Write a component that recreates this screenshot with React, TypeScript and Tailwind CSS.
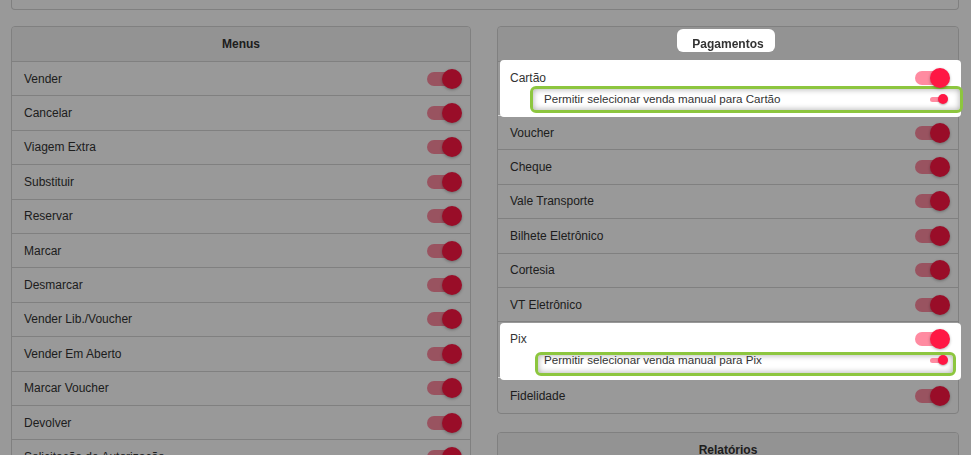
import React from 'react'

const menus = [
  'Vender',
  'Cancelar',
  'Viagem Extra',
  'Substituir',
  'Reservar',
  'Marcar',
  'Desmarcar',
  'Vender Lib./Voucher',
  'Vender Em Aberto',
  'Marcar Voucher',
  'Devolver',
  'Solicitação de Autorização',
]

const relatorios = ['Vendas', 'Caixa', 'Bilhetes']

function Switch({ small }: { small?: boolean }) {
  if (small) {
    return (
      <span className="relative block h-[10px] w-[18px] shrink-0">
        <span className="absolute left-0 top-[2.5px] h-[5px] w-[16px] rounded-full bg-[#ff1744]/50" />
        <span className="absolute right-0 top-0 h-[10px] w-[10px] rounded-full bg-[#ff1744] shadow-[0_1px_2px_rgba(0,0,0,0.3)]" />
      </span>
    )
  }
  return (
    <span className="relative block h-[20px] w-[35px] shrink-0">
      <span className="absolute left-0 top-[3px] h-[14px] w-[32px] rounded-full bg-[#ff1744]/50" />
      <span className="absolute right-0 top-0 h-[20px] w-[20px] rounded-full bg-[#ff1744] shadow-[0_1px_3px_rgba(0,0,0,0.3)]" />
    </span>
  )
}

function Row({ label }: { label: string }) {
  return (
    <div className="flex h-[34.4px] items-center justify-between border-b border-[#d5d5d5] pl-[12px] pr-[8px] last:border-b-0">
      <span>{label}</span>
      <Switch />
    </div>
  )
}

// linha destacada pelo tour, com a opção de venda manual
function RowDestaque({
  label,
  highlight,
  frame,
  pad,
}: {
  label: string
  highlight: string
  frame: string
  pad: string
}) {
  return (
    <div className={`relative z-20 border-b border-[#d5d5d5] pl-[12px] pr-[8px] ${pad}`}>
      <span className={`absolute -z-10 rounded-[4px] bg-white ${highlight}`} />
      <div className="flex h-[16px] items-center justify-between">
        <span>{label}</span>
        <Switch />
      </div>
      <div className="relative ml-[34px] mr-[2px] mt-[5px] flex h-[16px] items-center justify-between text-[11.6px]">
        <span
          className={`absolute -z-[5] rounded-[6px] border-[3px] border-[#8dc63f] bg-white shadow-[inset_0_0_6px_rgba(0,0,0,0.35)] ${frame}`}
        />
        <span>Permitir selecionar venda manual para {label}</span>
        <Switch small />
      </div>
    </div>
  )
}

function Header({ title }: { title: string }) {
  return (
    <div className="flex h-[35px] items-center justify-center border-b border-[#d5d5d5] bg-[#f5f5f5] font-bold">
      {title}
    </div>
  )
}

export default function App() {
  return (
    <div className="min-h-screen bg-white font-['Liberation_Sans',Arial,sans-serif] text-[12px] leading-[14px] text-[#333]">
      <div className="px-[11px]">
        <div className="h-[10px] w-[948px] rounded-b-[4px] border border-t-0 border-[#d5d5d5]" />

        <div className="mt-[16px] grid grid-cols-[460px_462px] items-start gap-[26px]">
          <div className="overflow-hidden rounded-[4px] border border-[#d5d5d5]">
            <Header title="Menus" />
            {menus.map((m) => (
              <Row key={m} label={m} />
            ))}
          </div>

          <div className="flex flex-col gap-[18px]">
            <div className="rounded-[4px] border border-[#d5d5d5]">
              <div className="flex h-[35px] items-center justify-center rounded-t-[4px] border-b border-[#d5d5d5] bg-[#f5f5f5] font-bold">
                <span className="relative z-20 inline-block">
                  <span className="absolute -bottom-[1px] -left-[15px] -right-[11px] -top-[8px] -z-10 rounded-[6px] bg-white" />
                  Pagamentos
                </span>
              </div>
              <RowDestaque
                label="Cartão"
                pad="pt-[8px] pb-[8px]"
                highlight="-top-[2px] -bottom-[2px] left-[2px] -right-[3px]"
                frame="-top-[5px] -bottom-[6px] -left-[14px] -right-[15px]"
              />
              {['Voucher', 'Cheque', 'Vale Transporte', 'Bilhete Eletrônico', 'Cortesia', 'VT Eletrônico'].map((p) => (
                <Row key={p} label={p} />
              ))}
              <RowDestaque
                label="Pix"
                pad="pt-[9px] pb-[9px]"
                highlight="top-[1px] -bottom-[3px] left-[2px] -right-[3px]"
                frame="top-0 -bottom-[8px] -left-[9px] -right-[8px]"
              />
              <Row label="Fidelidade" />
            </div>

            <div className="overflow-hidden rounded-[4px] border border-[#d5d5d5]">
              <Header title="Relatórios" />
              {relatorios.map((r) => (
                <Row key={r} label={r} />
              ))}
            </div>
          </div>
        </div>
      </div>

      <div className="fixed inset-0 z-10 bg-black/40" />
    </div>
  )
}
